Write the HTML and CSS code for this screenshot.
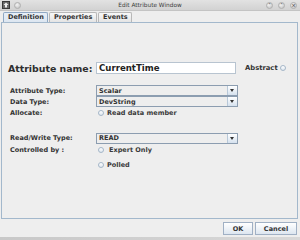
FILE: index.html
```html
<!DOCTYPE html>
<html lang="en">

<head>
    <meta charset="UTF-8">
    <title>Edit Attribute Window</title>
    <link rel="stylesheet" href="styles.css">
</head>

<body>

    <!-- Window title bar -->
    <div class="titlebar">
        <div class="title-left">
            <svg class="app-icon" width="8" height="8" viewBox="0 0 8 8">
                <rect x="0.5" y="0.5" width="7" height="7" fill="#6b6b6b" stroke="#3a3a3a"/>
                <path d="M4 1.5 L6.5 4 L5 4 L5 6.5 L3 6.5 L3 4 L1.5 4 Z" fill="#f0f0f0"/>
            </svg>
            <span class="win-btn"></span>
        </div>
        <div class="title">Edit Attribute Window</div>
        <div class="title-right">
            <span class="win-btn">&#x2c5;</span>
            <span class="win-btn">&#x2c4;</span>
            <span class="win-btn">&#xd7;</span>
        </div>
    </div>

    <!-- Tabs -->
    <div class="tabs">
        <div class="tab active">Definition</div>
        <div class="tab">Properties</div>
        <div class="tab">Events</div>
    </div>

    <div class="panel">
        <div class="name-row">
            <span class="name-label">Attribute name:</span>
            <div class="text-field">CurrentTime</div>
            <span class="abstract">Abstract <span class="radio"></span></span>
        </div>

        <div class="form">
            <span class="label">Attribute Type:</span>
            <div class="combo"><span>Scalar</span><span class="arrow"></span></div>

            <span class="label">Data Type:</span>
            <div class="combo"><span>DevString</span><span class="arrow"></span></div>

            <span class="label">Allocate:</span>
            <div class="radio-item"><span class="radio"></span>Read data member</div>
        </div>

        <div class="form rw">
            <span class="label">Read/Write Type:</span>
            <div class="combo"><span>READ</span><span class="arrow"></span></div>

            <span class="label">Controlled by :</span>
            <div class="radio-item wide"><span class="radio"></span>Expert Only</div>

            <span class="label"></span>
            <div class="radio-item polled"><span class="radio"></span>Polled</div>
        </div>
    </div>

    <div class="buttons">
        <button class="btn ok">OK</button>
        <button class="btn cancel">Cancel</button>
    </div>

    <div class="bottom-strip"></div>

</body>

</html>
```

FILE: styles.css
```css
body {
    margin: 0;
    width: 300px;
    height: 240px;
    overflow: hidden;
    background-color: #eeeeee;
    font-family: "DejaVu Sans", sans-serif;
    font-weight: bold;
    font-size: 6.5px;
    color: #333333;
}

/* Title bar */
.titlebar {
    height: 11px;
    display: flex;
    align-items: center;
    justify-content: space-between;
    background: linear-gradient(#e2e2e2, #d2d2d2);
    border-bottom: 1px solid #c4c4c4;
    box-sizing: border-box;
    padding: 0 3px 0 2px;
    position: relative;
}

.title {
    position: absolute;
    left: 0;
    right: 0;
    text-align: center;
    font-weight: normal;
    font-size: 5.8px;
    color: #3c3c3c;
}

.title-left,
.title-right {
    display: flex;
    align-items: center;
    gap: 4px;
    z-index: 1;
}

.title-right {
    gap: 5px;
}

.win-btn {
    width: 7px;
    height: 7px;
    border-radius: 50%;
    background: radial-gradient(circle at 40% 35%, #f4f4f4, #bdbdbd);
    border: 1px solid #b0b0b0;
    box-sizing: border-box;
    font-size: 5px;
    line-height: 5px;
    text-align: center;
    color: #555555;
}

/* Tabs */
.tabs {
    display: flex;
    padding-left: 3px;
    margin-top: 1px;
    height: 10px;
}

.tab {
    height: 10px;
    box-sizing: border-box;
    border: 1px solid #b8b8b8;
    border-bottom: none;
    border-radius: 2px 2px 0 0;
    background: linear-gradient(#f8f8f8, #e4e4e4);
    padding: 0 4px;
    margin-right: 1px;
    line-height: 9px;
    color: #333333;
}

.tab:nth-child(2) {
    width: 48px;
}

.tab:nth-child(3) {
    width: 34px;
}

.tab.active {
    width: 45px;
    border-color: #8fa8c4;
    background: linear-gradient(#e9eff6, #dce6f1);
}

/* Main panel */
.panel {
    margin: 0 2px 0 1px;
    height: 197px;
    box-sizing: border-box;
    border: 1px solid #a3b8cc;
    padding: 39px 0 0 6px;
}

.name-row {
    display: flex;
    align-items: center;
    height: 12px;
}

.name-label {
    width: 88px;
    font-size: 9.4px;
    color: #2f2f2f;
}

.text-field {
    width: 140px;
    height: 12px;
    box-sizing: border-box;
    background-color: #ffffff;
    border: 1px solid #b8c4d0;
    padding-left: 2px;
    font-size: 8.6px;
    line-height: 10px;
    color: #222222;
}

.abstract {
    margin-left: 9px;
    font-size: 6.8px;
    display: flex;
    align-items: center;
    gap: 2px;
}

.form {
    display: grid;
    grid-template-columns: 88px 140px;
    grid-auto-rows: 11px;
    align-items: center;
    margin-top: 11px;
    padding-left: 2px;
}

.form.rw {
    margin-top: 14px;
    grid-template-rows: 12px 12px 18px;
}

.label {
    color: #333333;
}

.combo {
    height: 11px;
    box-sizing: border-box;
    border: 1px solid #8c9db0;
    background-color: #eeeeee;
    display: flex;
    justify-content: space-between;
    align-items: center;
    padding-left: 2px;
    margin-left: -2px;
}

.combo .arrow {
    width: 9px;
    height: 9px;
    border-left: 1px solid #b8c8d8;
    background: linear-gradient(#ffffff, #d5e1ee);
    position: relative;
}

.combo .arrow::after {
    content: "";
    position: absolute;
    left: 2px;
    top: 3px;
    border-left: 2.5px solid transparent;
    border-right: 2.5px solid transparent;
    border-top: 3px solid #333333;
}

.radio-item {
    display: flex;
    align-items: center;
    gap: 3px;
    font-weight: bold;
    color: #3a3a3a;
}

.radio-item.wide {
    gap: 5px;
}

.radio {
    display: inline-block;
    width: 6px;
    height: 6px;
    border-radius: 50%;
    box-sizing: border-box;
    border: 1px solid #a4b6c8;
    background: linear-gradient(#ffffff, #dfe7ef);
}

/* Bottom buttons */
.buttons {
    display: flex;
    justify-content: flex-end;
    gap: 2px;
    padding: 3px 3px 0 0;
}

.btn {
    height: 13px;
    padding: 0;
    font-family: "DejaVu Sans", sans-serif;
    font-weight: bold;
    font-size: 6.5px;
    color: #333333;
    border: 1px solid #a0b0c4;
    border-radius: 0;
    background: linear-gradient(#ffffff, #dde6f0);
}

.btn.ok {
    width: 30px;
}

.btn.cancel {
    width: 42px;
}

.bottom-strip {
    margin-top: 2px;
    height: 4px;
    background: linear-gradient(90deg, #c8c8c8, #d8d8d8);
}
```
